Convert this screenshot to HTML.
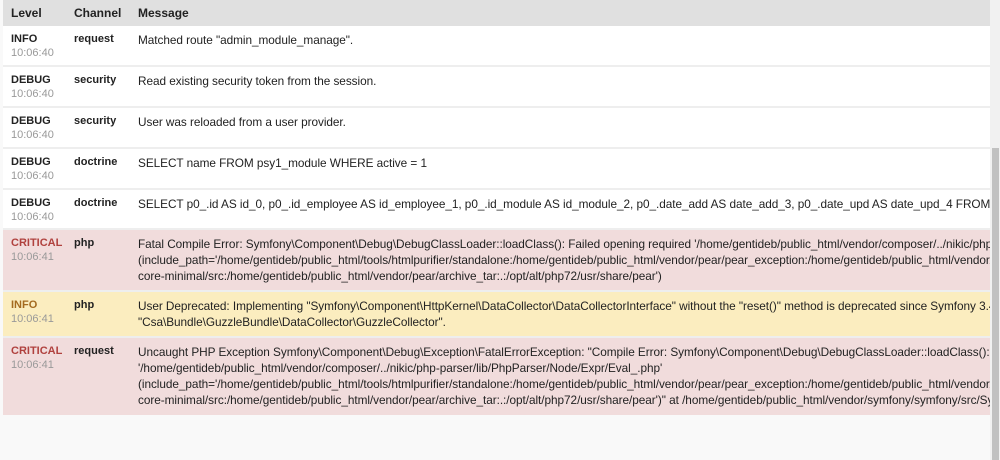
<!DOCTYPE html>
<html><head><style>
body{margin:0;width:1000px;height:460px;overflow:hidden;background:#f9f9f9;font-family:"Liberation Sans",Arial,sans-serif;font-size:12px;color:#222;position:relative}
.t{position:absolute;left:3px;top:0;width:987px}
.h{height:26px;background:#e0e0e0;font-weight:bold;position:relative}
.h span,.r span{position:absolute}
.r{position:relative;background:#fff;border-bottom:2px solid #eee;box-sizing:border-box;overflow:hidden;white-space:nowrap}
.lv{left:8px;top:7px;font-weight:bold;font-size:11px}
.tm{left:8px;top:21px;color:#999;font-size:11px}
.ch{left:71px;top:7px;font-weight:bold;font-size:11px}
.m{left:135px;top:6px;line-height:16px;font-size:11.8px;letter-spacing:-0.05px}
.cr{background:#f1dcdc}.cr .lv{color:#b0413e}
.wa{background:#fbedbf}.wa .lv{color:#a46a1f}
.sb{position:absolute;left:990px;top:0;width:10px;height:460px;background:#f1f1f1}
.th{position:absolute;left:992px;top:148px;width:7px;height:312px;background:#c1c1c1}
</style></head><body>
<div class="t">
<div class="h"><span style="left:8px;top:6px">Level</span><span style="left:71px;top:6px">Channel</span><span style="left:135px;top:6px">Message</span></div>
<div class="r" style="height:41px"><span class="lv">INFO</span><span class="tm">10:06:40</span><span class="ch">request</span><span class="m">Matched route "admin_module_manage".</span></div>
<div class="r" style="height:41px"><span class="lv">DEBUG</span><span class="tm">10:06:40</span><span class="ch">security</span><span class="m">Read existing security token from the session.</span></div>
<div class="r" style="height:41px"><span class="lv">DEBUG</span><span class="tm">10:06:40</span><span class="ch">security</span><span class="m">User was reloaded from a user provider.</span></div>
<div class="r" style="height:41px"><span class="lv">DEBUG</span><span class="tm">10:06:40</span><span class="ch">doctrine</span><span class="m">SELECT name FROM psy1_module WHERE active = 1</span></div>
<div class="r" style="height:40px"><span class="lv">DEBUG</span><span class="tm">10:06:40</span><span class="ch">doctrine</span><span class="m">SELECT p0_.id AS id_0, p0_.id_employee AS id_employee_1, p0_.id_module AS id_module_2, p0_.date_add AS date_add_3, p0_.date_upd AS date_upd_4 FROM</span></div>
<div class="r cr" style="height:62px"><span class="lv">CRITICAL</span><span class="tm">10:06:41</span><span class="ch">php</span><span class="m">Fatal Compile Error: Symfony\Component\Debug\DebugClassLoader::loadClass(): Failed opening required '/home/gentideb/public_html/vendor/composer/../nikic/php<br>(include_path='/home/gentideb/public_html/tools/htmlpurifier/standalone:/home/gentideb/public_html/vendor/pear/pear_exception:/home/gentideb/public_html/vendor/<br>core-minimal/src:/home/gentideb/public_html/vendor/pear/archive_tar:.:/opt/alt/php72/usr/share/pear')</span></div>
<div class="r wa" style="height:46px"><span class="lv">INFO</span><span class="tm">10:06:41</span><span class="ch">php</span><span class="m">User Deprecated: Implementing "Symfony\Component\HttpKernel\DataCollector\DataCollectorInterface" without the "reset()" method is deprecated since Symfony 3.4<br>"Csa\Bundle\GuzzleBundle\DataCollector\GuzzleCollector".</span></div>
<div class="r cr" style="height:77px;border-bottom:none"><span class="lv">CRITICAL</span><span class="tm">10:06:41</span><span class="ch">request</span><span class="m">Uncaught PHP Exception Symfony\Component\Debug\Exception\FatalErrorException: "Compile Error: Symfony\Component\Debug\DebugClassLoader::loadClass():<br>'/home/gentideb/public_html/vendor/composer/../nikic/php-parser/lib/PhpParser/Node/Expr/Eval_.php'<br>(include_path='/home/gentideb/public_html/tools/htmlpurifier/standalone:/home/gentideb/public_html/vendor/pear/pear_exception:/home/gentideb/public_html/vendor/<br>core-minimal/src:/home/gentideb/public_html/vendor/pear/archive_tar:.:/opt/alt/php72/usr/share/pear')" at /home/gentideb/public_html/vendor/symfony/symfony/src/Sy</span></div>
</div>
<div class="sb"></div><div class="th"></div>
</body></html>
